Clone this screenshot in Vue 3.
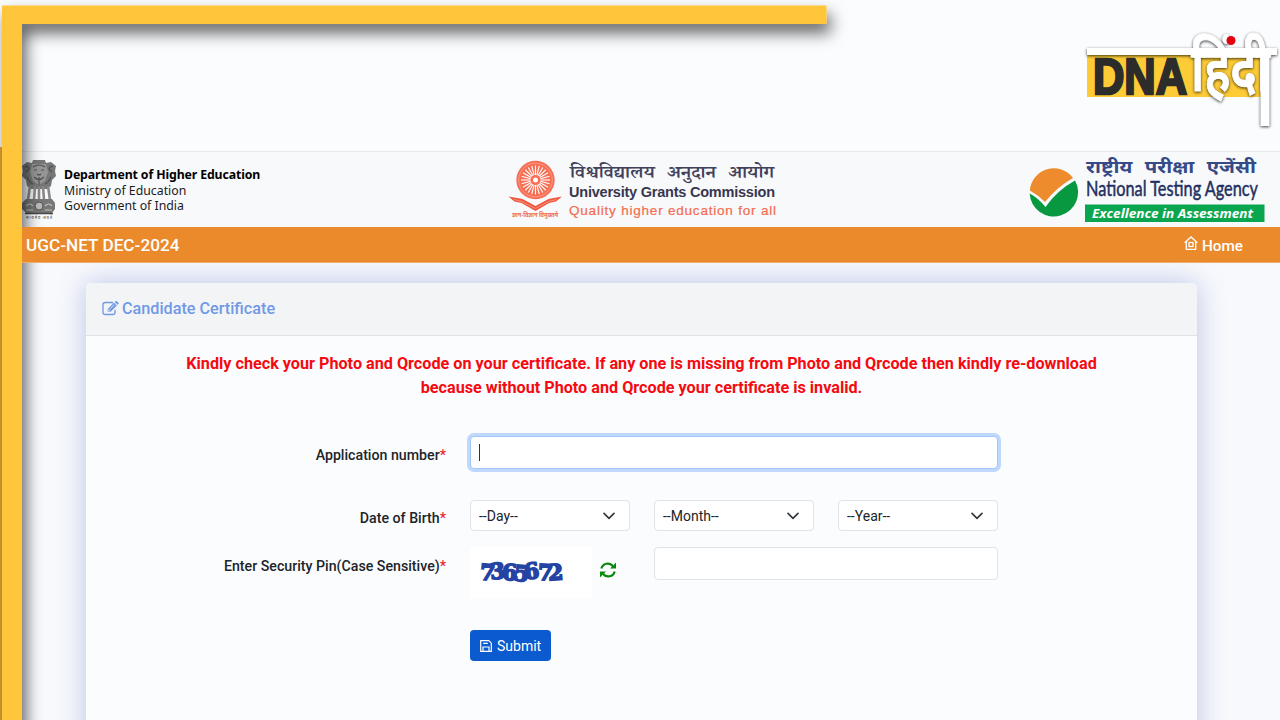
<template>
  <div class="page">
    <div class="frame" aria-hidden="true">
      <svg width="1280" height="720" viewBox="0 0 1280 720">
        <defs>
          <filter id="frameShadow" x="-5%" y="-5%" width="115%" height="115%">
            <feDropShadow dx="4" dy="9" stdDeviation="8" flood-color="#000" flood-opacity="0.62" />
          </filter>
        </defs>
        <rect class="frame__edge" x="0" y="147" width="3" height="573" />
        <path class="frame__bar" filter="url(#frameShadow)" d="M2 5.500H826.500V24H22V760H2z" />
      </svg>
    </div>

    <div class="top">
      <svg class="dna" width="200" height="110" viewBox="1080 24 200 110" role="img" aria-label="DNA हिंदी">
        <rect x="1087" y="52" width="176" height="45" fill="#fdcb35" />
        <text class="dna__latin" x="1093" y="94" textLength="94" lengthAdjust="spacingAndGlyphs">DNA</text>
        <g class="dna__hindi">
          <rect x="1087" y="48" width="190" height="7" />
          <text x="1191" y="91" textLength="79" lengthAdjust="spacingAndGlyphs">हिंदी</text>
          <rect x="1260.500" y="48" width="9" height="78" />
        </g>
        <circle cx="1231" cy="40.500" r="4.500" fill="#e3000f" />
      </svg>
    </div>

    <header class="brands">
      <div class="brand brand--moe">
        <svg class="emblem" width="36" height="62" viewBox="0 0 36 62" aria-hidden="true">
          <path fill="#777" d="M12 1h12l1 3 5-1 5 4-1 5 1 5-4 4-1 6-4 3H10l-4-3-1-6-4-4 1-5-1-5 5-4 5 1z" />
          <path fill="#969696" d="M11 5h14l2 8-3 9-6 4-6-4-3-9z" />
          <path fill="none" stroke="#505050" stroke-width="1.100" d="M12 8q6-4 12 0M13 11h3M20 11h3M16 15q2 2 4 0M13 18q5 5 10 0M4 8q3-2 4 2l-3 3M32 8q-3-2-4 2l3 3M6 18q3 6 6 7M30 18q-3 6-6 7M18 18v8" />
          <path fill="none" stroke="#888" stroke-width="2.600" d="M9 27L7 41M14 27l-1 14M18 28v13M22 27l1 14M27 27l2 14" />
          <path fill="#777" d="M5 40h26l3 4v6l-3 4H5l-4-4v-6z" />
          <circle cx="18" cy="47" r="4" fill="#bbb" stroke="#555" />
          <path fill="none" stroke="#c0c0c0" stroke-width="1.200" d="M5 47q4-4 7 0M24 47q4-4 7 0M5 51h7M24 51h7" />
          <path stroke="#484848" stroke-width="1.500" d="M4 54.500h28" />
          <text x="5" y="60" font-size="4" textLength="26" fill="#444">सत्यमेव जयते</text>
        </svg>
        <div class="moe">
          <strong>Department of Higher Education</strong>
          <span>Ministry of Education</span>
          <span>Government of India</span>
        </div>
      </div>

      <div class="brand brand--ugc">
        <svg width="272" height="64" viewBox="508 157 272 64" role="img" aria-label="University Grants Commission">
          <circle cx="535.500" cy="180" r="19.200" fill="#f66f55" />
          <circle cx="535.500" cy="180" r="16.800" fill="none" stroke="#fbb5a6" stroke-width=".6" />
          <g stroke="#fff" stroke-width="1.100">
            <line
              v-for="n in 24"
              :key="n"
              x1="535.500"
              y1="175"
              x2="535.500"
              y2="165.500"
              :transform="`rotate(${n * 15} 535.500 180)`"
            />
          </g>
          <circle cx="535.500" cy="180" r="2.500" fill="#fff" />
          <path fill="#ef573d" d="M508.500 196.500l14 2.500 13 7 13-7 13.500-2.500-6 5-7 1.500-13.500 8-14-8-7-1.500z" />
          <path fill="none" stroke="#f9a18d" stroke-width=".8" d="M514 199.500l8 2 13.500 7 13-7 8-2" />
          <text class="ugc__motto" x="512" y="217" textLength="46" lengthAdjust="spacingAndGlyphs">ज्ञान-विज्ञान विमुक्तये</text>
          <text class="ugc__hindi" x="570" y="178" textLength="204" lengthAdjust="spacingAndGlyphs">विश्वविद्यालय अनुदान आयोग</text>
          <text class="ugc__name" x="569" y="197" textLength="206">University Grants Commission</text>
          <text class="ugc__tag" x="569" y="214.500" textLength="207">Quality higher education for all</text>
        </svg>
      </div>

      <div class="brand brand--nta">
        <svg width="240" height="66" viewBox="1028 157 240 66" role="img" aria-label="National Testing Agency">
          <path fill="#ee8c2d" d="M1029.800 190.500a24 24 0 0 1 43.200-12.500q-16 9-28 24-7-7-15.200-11.500z" />
          <path fill="#08983f" d="M1029.700 193.500q8.500 4.500 15.800 13.500 12-17 29.500-26.500a24.200 24.200 0 1 1-45.300 13z" />
          <text class="nta__hindi" x="1086" y="173" textLength="170" lengthAdjust="spacingAndGlyphs">राष्ट्रीय परीक्षा एजेंसी</text>
          <text class="nta__name" x="1086" y="195.500" textLength="172" lengthAdjust="spacingAndGlyphs">National Testing Agency</text>
          <rect x="1085" y="204.500" width="179.500" height="17.500" fill="#0aa64f" />
          <text class="nta__tag" x="1092" y="217.500" textLength="161" lengthAdjust="spacingAndGlyphs">Excellence in Assessment</text>
        </svg>
      </div>
    </header>

    <nav class="bar">
      <span class="bar__title">UGC-NET DEC-2024</span>
      <a class="bar__home">
        <svg width="14" height="14" viewBox="0 0 14 14" fill="none" stroke="#fff" stroke-width="1.300">
          <path d="M.7 6.800L7 1l6.300 5.800M2.300 5.500v7.800h9.400V5.500" />
          <rect x="5" y="6.500" width="4" height="4" />
        </svg>
        <span>Home</span>
      </a>
    </nav>

    <main class="content">
      <section class="card">
        <h1 class="card__head">
          <svg width="17" height="15" viewBox="0 0 17 15" fill="none" stroke="currentColor" stroke-width="1.300">
            <path d="M11 1.500H3.200Q1 1.500 1 3.700v7.600q0 2.200 2.200 2.200h7.600q2.200 0 2.200-2.200V8.800" />
            <path fill="currentColor" stroke="none" d="M5.700 10.800V7.900L12 1.600l2.900 2.900-6.300 6.300zM12.700.9l.8-.7q.7-.5 1.300 0L16.400 1.800q.5.600 0 1.300l-.8.700z" />
            <path stroke="#f3f4f6" stroke-width=".8" d="M8 7.800l4.200-4.200M6.600 8.300v1.600h1.600" />
          </svg>
          Candidate Certificate
        </h1>

        <p class="notice">
          <span>Kindly check your Photo and Qrcode on your certificate. If any one is missing from Photo and Qrcode then kindly re-download</span>
          <span>because without Photo and Qrcode your certificate is invalid.</span>
        </p>

        <form class="form" @submit.prevent>
          <div class="row row--app">
            <label>Application number<i>*</i></label>
            <div class="input input--focus"><span class="caret" /></div>
          </div>

          <div class="row row--dob">
            <label>Date of Birth<i>*</i></label>
            <div class="trio">
              <div v-for="part in dateParts" :key="part" class="select">
                {{ part }}
                <svg width="12" height="8" viewBox="0 0 12 8" fill="none" stroke="#343a40" stroke-width="1.700" stroke-linecap="round" stroke-linejoin="round">
                  <path d="M1 1.300l5 5 5-5" />
                </svg>
              </div>
            </div>
          </div>

          <div class="row row--pin">
            <label>Enter Security Pin(Case Sensitive)<i>*</i></label>
            <div class="pin">
              <div class="captcha">
                <svg width="122" height="50" viewBox="0 0 122 50">
                  <text
                    v-for="d in captcha"
                    :key="d.x"
                    :x="d.x"
                    :y="d.y"
                    :transform="`rotate(${d.r} ${d.x + 6} 25)`"
                  >{{ d.c }}</text>
                </svg>
              </div>
              <svg class="refresh" width="16" height="16" viewBox="0 0 16 16" fill="none" stroke="#078a0c" stroke-width="2.200">
                <path d="M1.400 6.600A6.500 6.500 0 0 1 12.800 4M14.600 9.400A6.500 6.500 0 0 1 3.200 12" />
                <path fill="#078a0c" stroke="none" d="M16 .5v6h-6zM0 15.500v-6h6z" />
              </svg>
              <div class="input" />
            </div>
          </div>

          <button class="submit" type="submit">
            <svg width="12" height="12" viewBox="0 0 12 12" fill="none" stroke="#fff" stroke-width="1.200">
              <path d="M.7.700h8.100l2.500 2.500v8.100H.7z" />
              <path d="M3 11V7h6v4M3.200 3.400h4.600" />
            </svg>
            Submit
          </button>
        </form>
      </section>
    </main>
  </div>
</template>

<script setup>
const dateParts = ['--Day--', '--Month--', '--Year--'];

// each digit is nudged and tilted a little so they run into each other
const captcha = [
  { c: '7', x: 10, y: 33, r: 5 },
  { c: '3', x: 20, y: 32, r: -6 },
  { c: '6', x: 32, y: 33, r: 2 },
  { c: '5', x: 44, y: 34, r: 5 },
  { c: '6', x: 54, y: 32, r: -8 },
  { c: '7', x: 68, y: 33, r: 3 },
  { c: '2', x: 78, y: 33, r: -4 }
];
</script>

<style>
body {
  background: #fbfcfe;
}
</style>

<style scoped>
.page {
  position: relative;
  height: 720px;
  overflow: hidden;
  display: flex;
  flex-direction: column;
  background: #fbfcfe;
  color: #212529;
  font-family: Roboto, 'Noto Sans', sans-serif;
}
.frame {
  position: absolute;
  inset: 0;
  z-index: 1;
  pointer-events: none;
}
.frame__edge {
  fill: #e9a838;
}
.frame__bar {
  fill: #ffc53a;
}
.top {
  flex: none;
  height: 151px;
  display: flex;
  justify-content: flex-end;
  padding-top: 24px;
  box-sizing: border-box;
}
.dna__latin {
  font: 700 50px 'Liberation Sans', sans-serif;
  fill: #2c2c2b;
  stroke: #2c2c2b;
  stroke-width: 2.5;
}
.dna__hindi {
  fill: #fff;
  filter: drop-shadow(0 1px 1.5px rgba(0, 0, 0, 0.75));
}
.dna__hindi text {
  font: 600 64px 'Noto Sans Devanagari', 'Noto Sans', sans-serif;
  stroke: #fff;
  stroke-width: 1;
}
.brands {
  flex: none;
  height: 76px;
  box-sizing: border-box;
  display: flex;
  align-items: flex-start;
  border-top: 1px solid #e6e9eb;
  background: #f8f9fb;
  padding: 5px 12px 0 21px;
}
.brand--moe {
  display: flex;
  width: 487px;
  padding-top: 2px;
}
.moe {
  display: flex;
  flex-direction: column;
  padding: 8px 0 0 7px;
  font: 12.3px/15.6px 'Noto Sans', sans-serif;
  color: #1b1b1b;
}
.moe strong {
  color: #000;
  letter-spacing: -0.12px;
}
.brand--ugc {
  flex: 1;
}
.ugc__motto {
  font: 700 6px 'Noto Sans Devanagari', 'Noto Sans', sans-serif;
  fill: #ef6a50;
}
.ugc__hindi {
  font: 600 17px 'Noto Serif Devanagari', 'Noto Sans Devanagari', serif;
  word-spacing: 6px;
  fill: #42415a;
}
.ugc__name {
  font: 700 14.5px 'Liberation Sans', sans-serif;
  fill: #37364f;
}
.ugc__tag {
  font: 13.5px 'Liberation Sans', sans-serif;
  fill: #f46c4e;
  stroke: #f46c4e;
  stroke-width: 0.2;
}
.nta__hindi {
  font: 700 17px 'Noto Sans Devanagari', 'Noto Sans', sans-serif;
  word-spacing: 6px;
  fill: #354a86;
}
.nta__name {
  font: 22px Lato, sans-serif;
  fill: #22305f;
  stroke: #22305f;
  stroke-width: 0.5;
}
.nta__tag {
  font: italic 700 12.5px 'Open Sans', 'Noto Sans', sans-serif;
  fill: #fff;
}
.bar {
  position: relative;
  z-index: 2;
  flex: none;
  height: 36px;
  margin-left: 22px;
  box-sizing: border-box;
  display: flex;
  align-items: center;
  justify-content: space-between;
  padding: 1px 37px 0 4px;
  background: #ea8a2b;
  border-bottom: 1px solid #efae6c;
  color: #fff;
  font-weight: 500;
  font-size: 17.2px;
}
.bar__home {
  display: flex;
  gap: 4px;
  font-size: 15.3px;
}
.bar__home span {
  padding-top: 1px;
}
.content {
  flex: 1;
  padding: 20px 83px 0 86px;
  background: #f8f9fd;
}
.card {
  height: 500px;
  border-radius: 5px;
  background: #fbfcfe;
  box-shadow: 0 0 28px rgba(70, 96, 187, 0.35);
}
.card__head {
  display: flex;
  align-items: center;
  gap: 3px;
  height: 53px;
  box-sizing: border-box;
  margin: 0;
  padding: 0 16px 2px;
  border-bottom: 1px solid #dfe1e4;
  border-radius: 5px 5px 0 0;
  background: #f3f4f6;
  color: #7199e5;
  font-size: 16.2px;
  font-weight: 500;
}
.notice {
  display: flex;
  flex-direction: column;
  align-items: center;
  margin: 16px 0 0;
  color: #f50a0f;
  font-size: 16.2px;
  font-weight: 700;
  line-height: 24px;
  white-space: nowrap;
}
.form {
  display: flex;
  flex-direction: column;
  padding-top: 36px;
}
.row {
  display: grid;
  grid-template-columns: 360px 528px;
  column-gap: 24px;
}
.row label {
  text-align: right;
  font-size: 14.2px;
  font-weight: 500;
  line-height: 20px;
}
.row label i {
  color: #ef2531;
  font-style: normal;
}
.row--app label {
  padding-top: 9px;
}
.row--dob {
  margin-top: 31px;
}
.row--dob label {
  padding-top: 8px;
}
.row--pin {
  margin-top: 16px;
}
.row--pin label {
  padding-top: 9px;
}
.input {
  box-sizing: border-box;
  height: 33px;
  border: 1px solid #e0e3e7;
  border-radius: 4px;
  background: #fff;
}
.input--focus {
  display: flex;
  align-items: center;
  padding-left: 8px;
  border-color: #a3c6fb;
  box-shadow: 0 0 0 3px #bfd8fc;
}
.caret {
  width: 1px;
  height: 17px;
  background: #333;
}
.trio {
  display: grid;
  grid-template-columns: repeat(3, 1fr);
  column-gap: 24px;
}
.select {
  display: flex;
  align-items: center;
  justify-content: space-between;
  box-sizing: border-box;
  height: 31px;
  padding: 0 14px 0 8px;
  border: 1px solid #dfe2e6;
  border-radius: 4px;
  background: #fff;
  font-size: 14px;
}
.pin {
  display: grid;
  grid-template-columns: 130px 54px 344px;
  align-items: start;
}
.captcha {
  width: 122px;
  height: 51px;
  background: #fff;
}
.captcha text {
  font: 700 22px 'DejaVu Serif', serif;
  fill: #2443a2;
  stroke: #2443a2;
  stroke-width: 1.6;
}
.refresh {
  margin: 15px 0 0;
}
.submit {
  display: flex;
  align-items: center;
  gap: 5px;
  width: 81px;
  height: 31px;
  margin: 32px 0 0 384px;
  padding: 0 0 0 10px;
  border: 0;
  border-radius: 4px;
  background: #0b5acf;
  color: #fff;
  font: 14px Roboto, sans-serif;
}
</style>
